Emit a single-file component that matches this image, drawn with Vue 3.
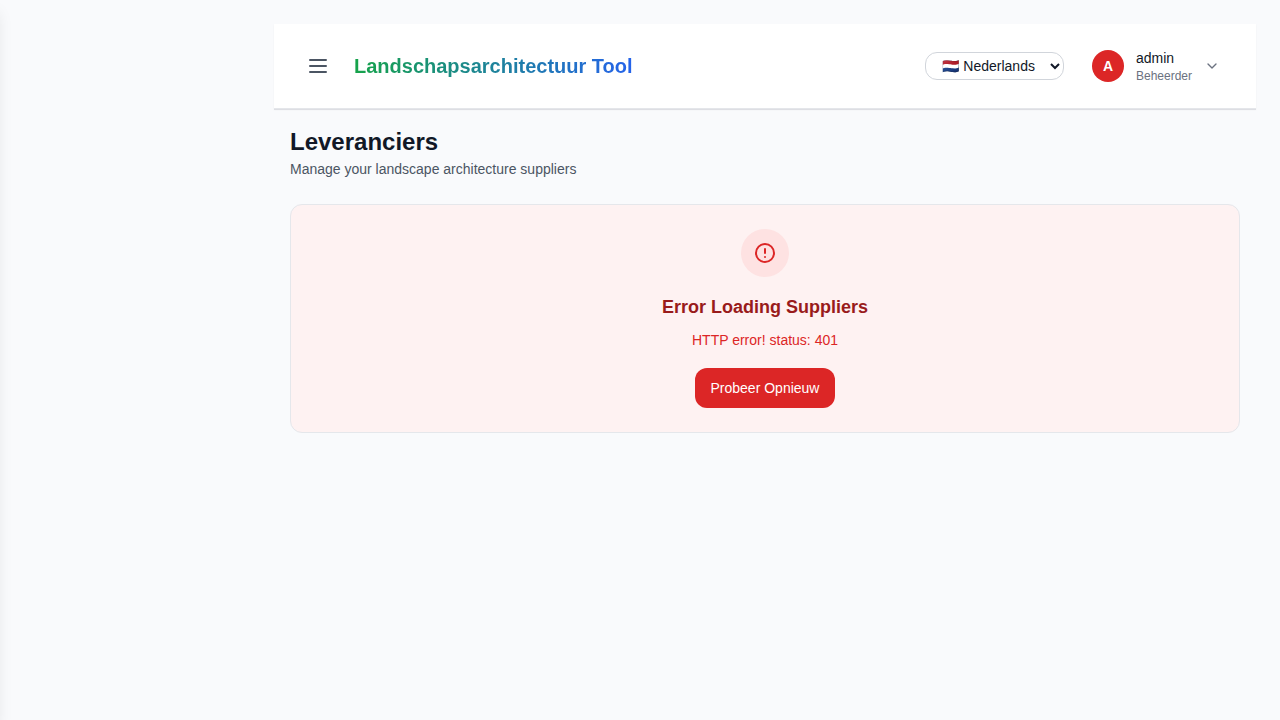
<script setup>
import { ref } from 'vue'

const language = ref('nl')
</script>

<template>
  <div class="app">
    <aside class="sidebar"></aside>
    <div class="content">
      <header class="topbar">
        <div class="brand">
          <button class="menu" aria-label="Menu">
            <svg width="24" height="24" viewBox="0 0 24 24" fill="none" stroke="currentColor" stroke-width="2" stroke-linecap="round" stroke-linejoin="round">
              <path d="M4 6h16M4 12h16M4 18h16" />
            </svg>
          </button>
          <h1>Landschapsarchitectuur Tool</h1>
        </div>
        <div class="actions">
          <select v-model="language" class="language">
            <option value="nl">🇳🇱 Nederlands</option>
          </select>
          <div class="user">
            <span class="avatar">A</span>
            <div class="who">
              <p class="name">admin</p>
              <p class="role">Beheerder</p>
            </div>
            <svg class="chevron" viewBox="0 0 24 24" fill="none" stroke="currentColor" stroke-width="2" stroke-linecap="round" stroke-linejoin="round">
              <path d="m6 9 6 6 6-6" />
            </svg>
          </div>
        </div>
      </header>
      <main>
        <h2>Leveranciers</h2>
        <p class="subtitle">Manage your landscape architecture suppliers</p>
        <section class="error">
          <div class="badge">
            <svg width="24" height="24" viewBox="0 0 24 24" fill="none" stroke="currentColor" stroke-width="2" stroke-linecap="round" stroke-linejoin="round">
              <path d="M12 8v4m0 4h.01M21 12a9 9 0 11-18 0 9 9 0 0118 0z" />
            </svg>
          </div>
          <h3>Error Loading Suppliers</h3>
          <p class="message">HTTP error! status: 401</p>
          <button class="retry">Probeer Opnieuw</button>
        </section>
      </main>
    </div>
  </div>
</template>

<style>
body {
  background: #f9fafb;
}
</style>

<style scoped>
.app {
  min-height: 100vh;
  box-sizing: border-box;
  padding: 24px 24px 0 274px;
  overflow: hidden;
  background: #f9fafc;
  color: #111827;
  font: 14px/20px "Liberation Sans", Arial, sans-serif;
}
h1, h2, h3, p {
  margin: 0;
}
button {
  font: inherit;
  border: 0;
  cursor: pointer;
}
.sidebar {
  position: fixed;
  top: 0;
  bottom: 0;
  left: 0;
  width: 256px;
  transform: translateX(-100%);
  background: #fff;
  box-shadow: 0 10px 15px -3px rgba(0, 0, 0, 0.1), 0 4px 6px -4px rgba(0, 0, 0, 0.1);
}
.topbar {
  display: flex;
  align-items: center;
  justify-content: space-between;
  height: 85px;
  box-sizing: border-box;
  padding: 0 32px 0 24px;
  background: #fff;
  border-bottom: 1px solid #e4e6ea;
  box-shadow: 0 1px 0 #dddee3, 0 1px 2px rgba(0, 0, 0, 0.04);
}
.brand, .actions, .user {
  display: flex;
  align-items: center;
}
.brand {
  gap: 16px;
}
.menu {
  display: flex;
  padding: 8px;
  background: transparent;
  color: #4b5563;
}
h1 {
  font-size: 20px;
  line-height: 28px;
  font-weight: 700;
  color: transparent;
  background: linear-gradient(to right, #16a34a, #2563eb);
  -webkit-background-clip: text;
  background-clip: text;
}
.actions {
  gap: 28px;
}
.language {
  width: 139px;
  height: 28px;
  box-sizing: border-box;
  padding: 0 0 0 12.5px;
  border: 1px solid #d1d5db;
  border-radius: 12px;
  background: #fff;
  color: #111827;
  font: inherit;
}
.avatar {
  width: 32px;
  height: 32px;
  margin-right: 12px;
  border-radius: 50%;
  background: #dc2626;
  color: #fff;
  font-weight: 700;
  line-height: 32px;
  text-align: center;
}
.who {
  padding-top: 2px;
}
.name {
  line-height: 18px;
}
.role {
  font-size: 12px;
  line-height: 18px;
  color: #6b7280;
}
.chevron {
  width: 16px;
  height: 16px;
  margin-left: 12px;
  margin-right: 4px;
  color: #6b7280;
}
main {
  padding: 17px 16px 0;
}
h2 {
  font-size: 24px;
  line-height: 32px;
}
.subtitle {
  margin: 1px 0 25px;
  color: #4b5563;
}
.error {
  display: flex;
  flex-direction: column;
  align-items: center;
  height: 229px;
  box-sizing: border-box;
  padding-top: 24px;
  border: 1px solid #e5e7eb;
  border-radius: 12px;
  background: #fef2f2;
}
.badge {
  display: flex;
  align-items: center;
  justify-content: center;
  width: 48px;
  height: 48px;
  margin-bottom: 16px;
  border-radius: 50%;
  background: #fee2e2;
  color: #dc2626;
}
h3 {
  font-size: 18px;
  line-height: 28px;
  color: #991b1b;
}
.message {
  margin: 9px 0 18px;
  color: #dc2626;
}
.retry {
  height: 40px;
  padding: 0 16px;
  border-radius: 12px;
  background: #dc2626;
  color: #fff;
}
</style>
